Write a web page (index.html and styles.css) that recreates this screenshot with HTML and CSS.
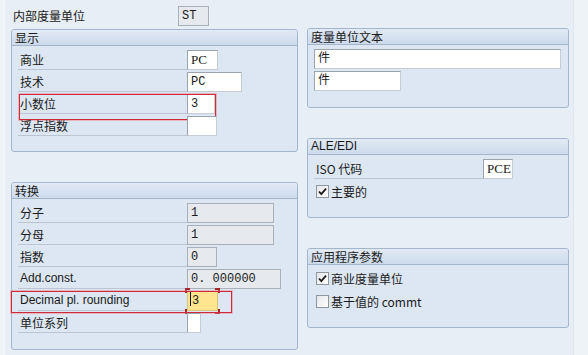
FILE: index.html
```html
<!DOCTYPE html>
<html lang="zh">
<head>
    <meta charset="UTF-8">
    <title>度量单位</title>
    <link rel="stylesheet" href="styles.css">
</head>
<body>
    <div class="screen">
        <div class="col col-left">
            <div class="top-row">
                <span class="top-label">内部度量单位</span>
                <span class="field ro w31">ST</span>
            </div>

            <div class="group g-display">
                <div class="group-title">显示</div>
                <div class="group-body">
                    <div class="row"><span class="label">商业</span><span class="field w31 serif">PC</span></div>
                    <div class="row"><span class="label">技术</span><span class="field w55">PC</span></div>
                    <div class="row marked">
                        <span class="label">小数位</span><span class="field w28">3</span>
                        <span class="mark mark-dec"></span>
                    </div>
                    <div class="row"><span class="label">浮点指数</span><span class="field w30"></span></div>
                </div>
            </div>

            <div class="group g-convert">
                <div class="group-title">转换</div>
                <div class="group-body">
                    <div class="row"><span class="label">分子</span><span class="field ro w87">1</span></div>
                    <div class="row"><span class="label">分母</span><span class="field ro w87">1</span></div>
                    <div class="row"><span class="label">指数</span><span class="field ro w30">0</span></div>
                    <div class="row"><span class="label latin">Add.const.</span><span class="field ro w94">0. 000000</span></div>
                    <div class="row marked">
                        <span class="label latin">Decimal pl. rounding</span>
                        <span class="field focus w31"><i class="cursor"></i>3</span>
                        <span class="focus-corners"></span>
                        <span class="mark mark-round"></span>
                    </div>
                    <div class="row"><span class="label">单位系列</span><span class="field w14"></span></div>
                </div>
            </div>
        </div>

        <div class="col col-right">
            <div class="group g-small">
                <div class="group-title">度量单位文本</div>
                <div class="group-body">
                    <div class="row"><span class="field w247">件</span></div>
                    <div class="row"><span class="field w87">件</span></div>
                </div>
            </div>

            <div class="group g-small">
                <div class="group-title latin">ALE/EDI</div>
                <div class="group-body">
                    <div class="row"><span class="label">ISO 代码</span><span class="field w30 serif">PCE</span></div>
                    <label class="check-row">
                        <span class="check on"><svg viewBox="0 0 11 11" width="11" height="11"><path d="M2 5.5 L4.3 8.2 L9 2.6" fill="none" stroke="#1e1e1e" stroke-width="1.8"/></svg></span>
                        主要的
                    </label>
                </div>
            </div>

            <div class="group g-small">
                <div class="group-title">应用程序参数</div>
                <div class="group-body app">
                    <label class="check-row">
                        <span class="check on"><svg viewBox="0 0 11 11" width="11" height="11"><path d="M2 5.5 L4.3 8.2 L9 2.6" fill="none" stroke="#1e1e1e" stroke-width="1.8"/></svg></span>
                        商业度量单位
                    </label>
                    <label class="check-row">
                        <span class="check"></span>
                        基于值的 commt
                    </label>
                </div>
            </div>
        </div>
    </div>
</body>
</html>
```

FILE: styles.css
```css
body {
    margin: 0;
    background: #eef3f8;
    font-family: "Noto Sans CJK SC", "Liberation Sans", sans-serif;
    font-size: 12px;
    color: #1a1a1a;
}

.screen {
    display: flex;
    gap: 9px;
    height: 355px;
    box-sizing: border-box;
    margin-left: 4px;
    width: 570px;
    padding: 6px 0 0 6px;
    background: #e8eef6;
    border-left: 1px solid #f6f9fc;
    border-right: 1px solid #dde5ee;
}

.col-left {
    width: 287px;
}

.col-right {
    width: 262px;
    padding-top: 22px;
}

.top-row {
    display: flex;
    height: 20px;
    margin-bottom: 3px;
    padding-left: 2px;
    line-height: 20px;
}

.top-label {
    width: 165px;
}

/* group boxes */
.group {
    border: 1px solid #a3b6ce;
    border-radius: 3px;
    background: #dde7f3;
    box-sizing: border-box;
}

.group + .group {
    margin-top: 30px;
}

.g-display { height: 123px; }
.g-convert { height: 168px; }
.g-small { height: 80px; }

.group-title {
    height: 15px;
    line-height: 15px;
    padding-left: 3px;
    border-bottom: 1px solid #a3b6ce;
    border-radius: 2px 2px 0 0;
    background: linear-gradient(#e2eaf5, #ccdaec);
}

.group-body {
    padding: 4px 0 0 6px;
}

.group-body.app {
    padding-top: 3px;
}

.row {
    position: relative;
    display: flex;
    height: 20px;
    margin-bottom: 2px;
}

.label {
    width: 167px;
    padding-left: 2px;
    line-height: 19px;
    border-bottom: 1px solid #bcc6d2;
    height: 19px;
}

.latin {
    font-family: "Liberation Sans", sans-serif;
}

/* input fields */
.field {
    display: block;
    height: 20px;
    box-sizing: border-box;
    padding-left: 3px;
    line-height: 18px;
    background: #fff;
    border: 1px solid #9aa4ae;
    border-bottom-color: #c6ccd3;
    border-right-color: #c6ccd3;
    font-family: "Liberation Mono", "Noto Sans CJK SC", monospace;
    font-size: 12px;
    white-space: pre;
    overflow: hidden;
}

.field.serif {
    font-family: "Liberation Serif", serif;
    font-size: 13px;
}

.field.ro {
    background: #e6eaee;
    border-color: #a9b0b8;
}

.field.focus {
    background: #ffe58f;
    border-color: #d9c27a;
    padding-left: 2px;
}

.cursor {
    display: inline-block;
    width: 1px;
    height: 14px;
    margin-right: 1px;
    vertical-align: -2px;
    background: #111;
}

.w14 { width: 14px; }
.w28 { width: 28px; }
.w30 { width: 30px; }
.w31 { width: 31px; }
.w55 { width: 55px; }
.w87 { width: 87px; }
.w94 { width: 94px; }
.w247 { width: 247px; }

/* red annotation frames drawn over the rows */
.mark {
    position: absolute;
    top: 0;
    border: 1px solid #cf2a3c;
    box-shadow: 0 0 0 1px rgba(232, 120, 130, 0.45);
    pointer-events: none;
}

.mark-dec {
    left: 1px;
    width: 195px;
    height: 24px;
}

.mark-round {
    left: -7px;
    width: 219px;
    height: 20px;
}

.focus-corners {
    position: absolute;
    left: 167px;
    top: -3px;
    width: 35px;
    height: 26px;
    background:
        linear-gradient(#a3262a, #a3262a) left top / 5px 2px no-repeat,
        linear-gradient(#a3262a, #a3262a) left top / 2px 5px no-repeat,
        linear-gradient(#a3262a, #a3262a) right top / 5px 2px no-repeat,
        linear-gradient(#a3262a, #a3262a) right top / 2px 5px no-repeat,
        linear-gradient(#a3262a, #a3262a) left bottom / 5px 2px no-repeat,
        linear-gradient(#a3262a, #a3262a) left bottom / 2px 5px no-repeat,
        linear-gradient(#a3262a, #a3262a) right bottom / 5px 2px no-repeat,
        linear-gradient(#a3262a, #a3262a) right bottom / 2px 5px no-repeat;
}

/* checkboxes */
.check-row {
    display: flex;
    align-items: center;
    gap: 2px;
    height: 21px;
    margin-bottom: 2px;
    padding-left: 2px;
}

.check {
    display: flex;
    align-items: center;
    justify-content: center;
    width: 13px;
    height: 13px;
    box-sizing: border-box;
    border: 1px solid #8e969e;
    background: linear-gradient(135deg, #e4e6e8, #fff);
}
```
